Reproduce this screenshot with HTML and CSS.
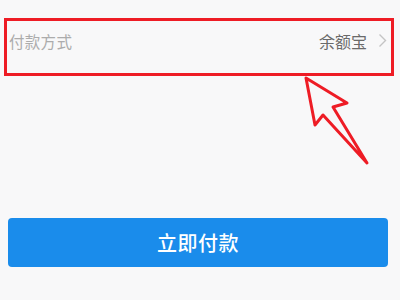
FILE: index.html
```html
<!DOCTYPE html>
<html lang="zh">
<head>
<meta charset="utf-8">
<link rel="stylesheet" href="styles.css">
</head>
<body>
<div class="page">
  <div class="row">
    <span class="label">付款方式</span>
    <span class="value">余额宝<span class="chev"><svg width="9" height="15" viewBox="0 0 9 15"><path d="M1.5 1.5 L7.5 7.5 L1.5 13.5" fill="none" stroke="#c4c4c4" stroke-width="1.4"/></svg></span></span>
  </div>
  <div class="spacer"></div>
  <button class="pay">立即付款</button>
  <svg class="arrow" width="400" height="300" viewBox="0 0 400 300">
    <polygon points="306,78 315,125 323,115 367,163 333,107 347,103" fill="#f8f8f9" stroke="#ee1c25" stroke-width="3" stroke-linejoin="round"/>
  </svg>
</div>
</body>
</html>
```
FILE: styles.css
```css
html, body {
  margin: 0;
  padding: 0;
  background: #f8f8f9;
  font-family: "Noto Sans CJK SC", "Noto Sans", sans-serif;
}
.page {
  position: relative;
  width: 400px;
  height: 300px;
  overflow: hidden;
  padding-top: 18px;
  box-sizing: border-box;
}
.row {
  margin: 0 6px 0 4px;
  height: 58px;
  box-sizing: border-box;
  border: 3px solid #ee1c25;
  display: flex;
  align-items: center;
  justify-content: space-between;
  padding: 0 4px 13px 2px;
}
.label {
  font-size: 15.5px;
  color: #acacac;
  letter-spacing: 0.3px;
}
.value {
  font-size: 16px;
  color: #6a6a6a;
  display: flex;
  align-items: center;
}
.chev {
  display: flex;
  margin-left: 11px;
}
.spacer {
  height: 142px;
}
.pay {
  display: block;
  margin: 0 12px 0 8px;
  width: 380px;
  height: 49px;
  border: none;
  border-radius: 4px;
  background: #1a8ceb;
  color: #ffffff;
  font-family: "Noto Sans CJK SC", sans-serif;
  font-size: 20px;
  font-weight: 500;
  letter-spacing: 0.5px;
}
.arrow {
  position: absolute;
  left: 0;
  top: 0;
  pointer-events: none;
}
```
